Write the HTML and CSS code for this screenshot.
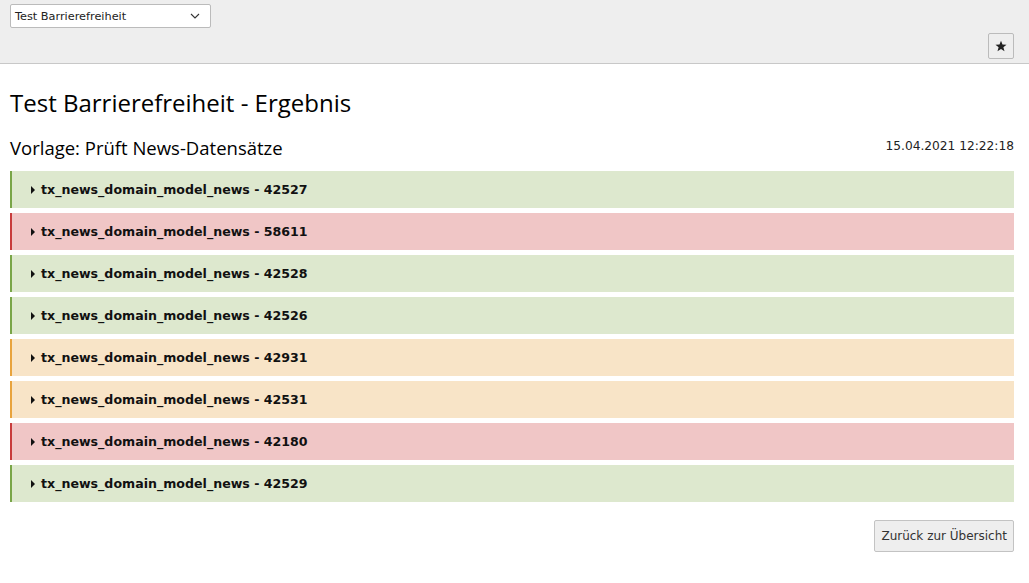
FILE: index.html
```html
<!DOCTYPE html>
<html lang="de">
<head>
<meta charset="utf-8">
<title>Test Barrierefreiheit - Ergebnis</title>
<link rel="stylesheet" href="styles.css">
</head>
<body>
<div class="topbar">
  <div class="topbar-row">
    <div class="select">
      <span>Test Barrierefreiheit</span>
      <svg class="chev" width="10" height="6" viewBox="0 0 10 6"><path d="M1 1 L5 5 L9 1" fill="none" stroke="#333" stroke-width="1.1"/></svg>
    </div>
  </div>
  <div class="topbar-row right">
    <button class="star-btn" aria-label="Favorit">
      <svg width="12" height="12" viewBox="0 0 24 24"><path d="M12 1.5 L15 9 L23 9.4 L16.8 14.4 L19 22.5 L12 17.9 L5 22.5 L7.2 14.4 L1 9.4 L9 9 Z" fill="#222"/></svg>
    </button>
  </div>
</div>
<main class="content">
  <h1 class="title">Test Barrierefreiheit - Ergebnis</h1>
  <div class="subhead">
    <h2 class="subtitle">Vorlage: Prüft News-Datensätze</h2>
    <span class="date">15.04.2021 12:22:18</span>
  </div>
  <div class="list">
    <div class="item ok"><span class="caret"></span>tx_news_domain_model_news - 42527</div>
    <div class="item err"><span class="caret"></span>tx_news_domain_model_news - 58611</div>
    <div class="item ok"><span class="caret"></span>tx_news_domain_model_news - 42528</div>
    <div class="item ok"><span class="caret"></span>tx_news_domain_model_news - 42526</div>
    <div class="item warn"><span class="caret"></span>tx_news_domain_model_news - 42931</div>
    <div class="item warn"><span class="caret"></span>tx_news_domain_model_news - 42531</div>
    <div class="item err"><span class="caret"></span>tx_news_domain_model_news - 42180</div>
    <div class="item ok"><span class="caret"></span>tx_news_domain_model_news - 42529</div>
  </div>
  <div class="actions">
    <button class="btn">Zurück zur Übersicht</button>
  </div>
</main>
</body>
</html>
```
FILE: styles.css
```css
html, body { margin: 0; padding: 0; background: #fff; }
body { font-family: "DejaVu Sans", Verdana, sans-serif; color: #000; }
.topbar {
  background: #eeeeee;
  border-bottom: 1px solid #c8c8c8;
  height: 64px;
  box-sizing: border-box;
  padding: 4px 15px 0 10px;
}
.topbar-row { display: flex; }
.topbar-row.right { justify-content: flex-end; margin-top: 5px; }
.select {
  width: 201px;
  height: 24px;
  box-sizing: border-box;
  background: #fff;
  border: 1px solid #bbbbbb;
  border-radius: 2px;
  display: flex;
  align-items: center;
  justify-content: space-between;
  padding: 0 10px 0 4px;
  font-size: 11.3px;
  color: #222;
}
.chev { display: block; }
.star-btn {
  width: 26px; height: 26px;
  box-sizing: border-box;
  border: 1px solid #bbbbbb;
  border-radius: 2px;
  background: #eeeeee;
  padding: 0;
  display: flex; align-items: center; justify-content: center;
}
.content { padding: 0 15px 0 10px; }
.title {
  font-family: "Open Sans", "Noto Sans", sans-serif;
  font-weight: 400;
  font-size: 24px;
  margin: 24px 0 0 0;
  line-height: 30px;
}
.subhead {
  display: flex;
  justify-content: space-between;
  align-items: center;
  margin-top: 18px;
}
.subtitle {
  font-family: "Open Sans", "Noto Sans", sans-serif;
  font-weight: 400;
  font-size: 18.5px;
  margin: 0;
  line-height: 24px;
}
.date { font-size: 12.2px; color: #222; margin-top: -4px; }
.list { display: flex; flex-direction: column; gap: 5px; margin-top: 11px; }
.item {
  height: 37px;
  box-sizing: border-box;
  border-left: 2px solid;
  display: flex;
  align-items: center;
  padding-left: 19px;
  font-weight: bold;
  font-size: 12.6px;
  color: #111;
}
.caret {
  width: 0; height: 0;
  border-top: 4px solid transparent;
  border-bottom: 4px solid transparent;
  border-left: 4px solid #111;
  margin-right: 6px;
}
.ok { background: #dde8ce; border-left-color: #79a548; }
.err { background: #f0c6c6; border-left-color: #c83c3c; }
.warn { background: #f8e4c7; border-left-color: #e8a33d; }
.actions { display: flex; justify-content: flex-end; margin-top: 18px; }
.btn {
  font-family: "DejaVu Sans", Verdana, sans-serif;
  font-size: 12px;
  color: #333;
  background: #eeeeee;
  border: 1px solid #c3c3c3;
  border-radius: 2px;
  height: 32px;
  padding: 0 6px;
}
```
